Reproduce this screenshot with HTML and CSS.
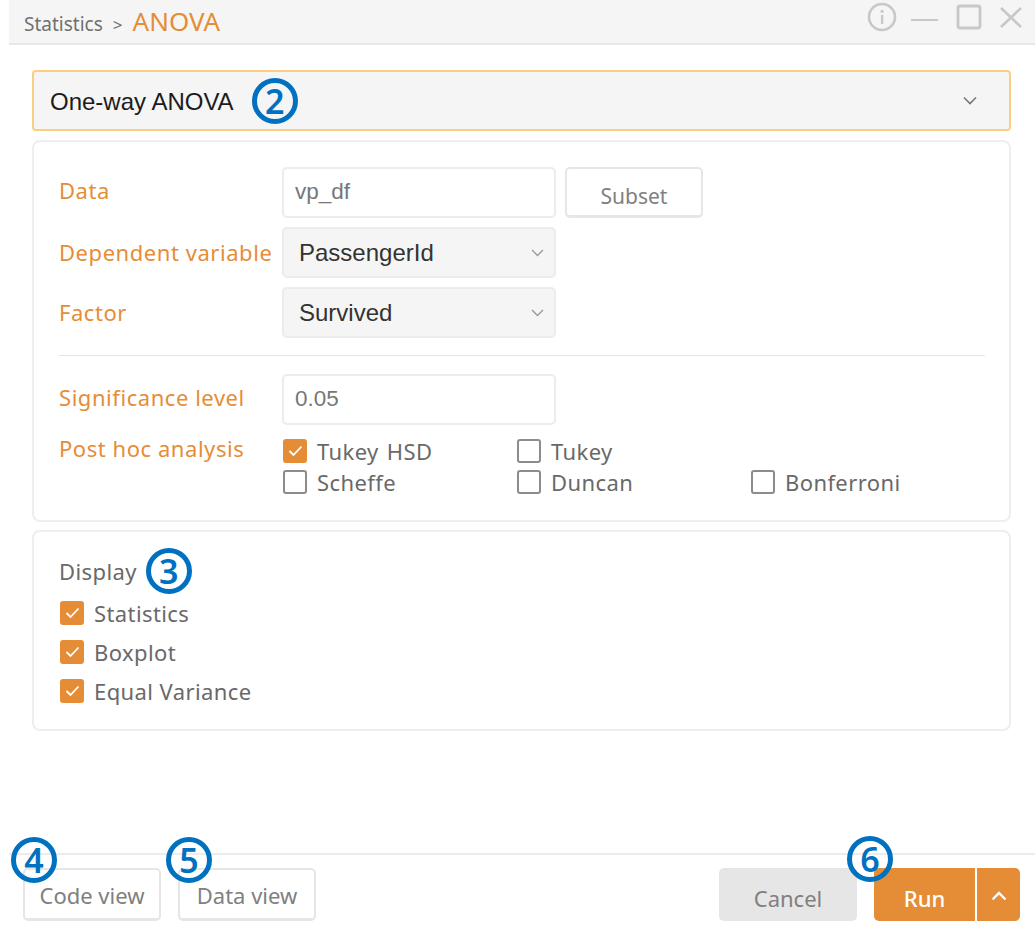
FILE: index.html
```html
<!DOCTYPE html>
<html lang="en">
  <head>
    <meta charset="UTF-8" />
    <meta name="viewport" content="width=device-width, initial-scale=1.0" />
    <title>ANOVA</title>
    <link rel="stylesheet" href="styles.css">
  </head>
  <body>
    <div class="window">
      <header class="title-bar">
        <div class="crumbs">
          <span class="crumb">Statistics</span>
          <span class="crumb-sep">&gt;</span>
          <span class="crumb-current">ANOVA</span>
        </div>
        <div class="window-icons">
          <svg class="icon-info" width="30" height="30" viewBox="0 0 30 30">
            <circle cx="15" cy="15" r="13" fill="none" stroke="#c8c8c8" stroke-width="2.6" />
            <rect x="13.9" y="13" width="2.4" height="9" fill="#c8c8c8" />
            <circle cx="15.1" cy="9.4" r="1.6" fill="#c8c8c8" />
          </svg>
          <svg class="icon-min" width="28" height="4" viewBox="0 0 28 4">
            <rect x="0" y="1" width="27" height="2" fill="#c8c8c8" />
          </svg>
          <svg class="icon-max" width="26" height="26" viewBox="0 0 26 26">
            <rect x="2" y="2" width="22" height="22" rx="2" fill="none" stroke="#c8c8c8" stroke-width="2.8" />
          </svg>
          <svg class="icon-close" width="24" height="24" viewBox="0 0 24 24">
            <path d="M2 3 L22 22 M22 3 L2 22" fill="none" stroke="#c8c8c8" stroke-width="2.6" />
          </svg>
        </div>
      </header>

      <main class="content">
        <div class="type-select">
          <span class="type-name">One-way ANOVA</span>
          <span class="badge">2</span>
          <svg class="chevron type-chevron" width="14" height="9" viewBox="0 0 14 9">
            <path d="M1 1.5 L7 7.5 L13 1.5" fill="none" stroke="#777" stroke-width="1.6" />
          </svg>
        </div>

        <section class="panel panel-options">
          <div class="form-row">
            <label class="field-label field-label-raised">Data</label>
            <div class="text-box">vp_df</div>
            <button class="subset-button">Subset</button>
          </div>
          <div class="form-row">
            <label class="field-label">Dependent variable</label>
            <div class="select-box">
              <span>PassengerId</span>
              <svg class="chevron" width="13" height="8" viewBox="0 0 13 8">
                <path d="M1 1 L6.5 6.5 L12 1" fill="none" stroke="#999" stroke-width="1.4" />
              </svg>
            </div>
          </div>
          <div class="form-row">
            <label class="field-label">Factor</label>
            <div class="select-box">
              <span>Survived</span>
              <svg class="chevron" width="13" height="8" viewBox="0 0 13 8">
                <path d="M1 1 L6.5 6.5 L12 1" fill="none" stroke="#999" stroke-width="1.4" />
              </svg>
            </div>
          </div>
          <hr class="divider" />
          <div class="form-row">
            <label class="field-label field-label-raised">Significance level</label>
            <div class="text-box">0.05</div>
          </div>
          <div class="form-row form-row-checks">
            <label class="field-label">Post hoc analysis</label>
            <div class="check-grid">
              <div class="check"><span class="box checked"><svg width="15" height="12" viewBox="0 0 15 12"><path d="M1.5 6 L5.5 10 L13.5 1.5" fill="none" stroke="#fff" stroke-width="1.8" /></svg></span>Tukey HSD</div>
              <div class="check"><span class="box"></span>Tukey</div>
              <div class="check-empty"></div>
              <div class="check"><span class="box"></span>Scheffe</div>
              <div class="check"><span class="box"></span>Duncan</div>
              <div class="check"><span class="box"></span>Bonferroni</div>
            </div>
          </div>
        </section>

        <section class="panel panel-display">
          <div class="display-head">
            <span class="display-title">Display</span>
            <span class="badge">3</span>
          </div>
          <div class="check display-check"><span class="box checked"><svg width="15" height="12" viewBox="0 0 15 12"><path d="M1.5 6 L5.5 10 L13.5 1.5" fill="none" stroke="#fff" stroke-width="1.8" /></svg></span>Statistics</div>
          <div class="check display-check"><span class="box checked"><svg width="15" height="12" viewBox="0 0 15 12"><path d="M1.5 6 L5.5 10 L13.5 1.5" fill="none" stroke="#fff" stroke-width="1.8" /></svg></span>Boxplot</div>
          <div class="check display-check"><span class="box checked"><svg width="15" height="12" viewBox="0 0 15 12"><path d="M1.5 6 L5.5 10 L13.5 1.5" fill="none" stroke="#fff" stroke-width="1.8" /></svg></span>Equal Variance</div>
        </section>
      </main>

      <footer class="footer">
        <div class="footer-left">
          <button class="view-button">Code view<span class="badge badge-view">4</span></button>
          <button class="view-button">Data view<span class="badge badge-view">5</span></button>
        </div>
        <div class="footer-right">
          <button class="cancel-button">Cancel</button>
          <button class="run-button">Run<span class="badge badge-run">6</span></button>
          <button class="run-more">
            <svg width="16" height="10" viewBox="0 0 16 10">
              <path d="M1.5 8.5 L8 2 L14.5 8.5" fill="none" stroke="#fff" stroke-width="2.4" />
            </svg>
          </button>
        </div>
      </footer>
    </div>
  </body>
</html>
```

FILE: styles.css
```css
* {
  box-sizing: border-box;
}
body {
  margin: 0;
  background-color: #fff;
  font-family: "Noto Sans", sans-serif;
  color: #696969;
}
.window {
  width: 1035px;
  height: 931px;
  padding-left: 9px;
  display: flex;
  flex-direction: column;
}
.title-bar {
  height: 45px;
  flex: none;
  background-color: #f5f5f5;
  border-bottom: 2px solid #e8e8e8;
  display: flex;
  justify-content: space-between;
  align-items: center;
  padding: 0 12px 0 15px;
}
.crumbs {
  display: flex;
  align-items: baseline;
  margin-top: -2px;
}
.crumb {
  font-size: 19px;
  color: #707070;
}
.crumb-sep {
  font-size: 17px;
  color: #707070;
  margin: 0 10px;
}
.crumb-current {
  font-size: 26px;
  color: #e58d36;
}
.window-icons {
  display: flex;
  align-items: center;
  margin: -10px 0 0;
}
.icon-min {
  margin: 6px 0 0 14px;
}
.icon-max {
  margin-left: 17px;
}
.icon-close {
  margin-left: 17px;
}
.content {
  flex: 1;
  padding: 25px 24px 0 23px;
  display: flex;
  flex-direction: column;
}
.type-select {
  height: 61px;
  margin-bottom: 9px;
  background-color: #f5f5f5;
  border: 2px solid #fbcf7f;
  border-radius: 4px;
  display: flex;
  align-items: center;
  padding: 0 32px 0 16px;
  font-family: "Liberation Sans", sans-serif;
  font-size: 24px;
  color: #1c1c1c;
}
.type-name {
  margin-right: 18px;
  padding-top: 2px;
}
.type-chevron {
  margin-left: auto;
}
.badge {
  width: 46px;
  height: 46px;
  border: 5px solid #0070c0;
  border-radius: 50%;
  color: #0070c0;
  font-family: "Noto Sans", sans-serif;
  font-size: 34px;
  font-weight: 600;
  line-height: 1;
  display: inline-flex;
  align-items: center;
  justify-content: center;
  flex: none;
}
.panel {
  border: 2px solid #eeeeee;
  border-radius: 8px;
  background-color: #fff;
}
.panel-options {
  height: 382px;
  margin-bottom: 8px;
  padding: 25px 26px 0 25px;
  display: flex;
  flex-direction: column;
  gap: 9px;
}
.form-row {
  display: flex;
  align-items: center;
  height: 51px;
}
.field-label {
  position: relative;
  top: -1px;
  width: 223px;
  flex: none;
  font-size: 22px;
  letter-spacing: 0.55px;
  color: #e58d36;
}
.field-label-raised {
  top: -3px;
}
.text-box,
.select-box {
  width: 274px;
  height: 51px;
  border: 2px solid #ececec;
  border-radius: 5px;
  display: flex;
  align-items: center;
}
.text-box {
  padding: 0 11px 2px;
  font-family: "Liberation Sans", sans-serif;
  font-size: 22.5px;
  color: #777;
  background-color: #fff;
}
.select-box {
  background-color: #f5f5f5;
  padding: 1px 10px 0 15px;
  justify-content: space-between;
  font-family: "Liberation Sans", sans-serif;
  font-size: 24px;
  color: #333;
}
.subset-button {
  width: 138px;
  height: 51px;
  margin-left: 9px;
  border: 2px solid #e6e6e6;
  border-bottom-width: 3px;
  border-radius: 5px;
  background-color: #fff;
  font-family: "Noto Sans", sans-serif;
  font-size: 21px;
  color: #808080;
  padding-top: 8px;
}
.divider {
  border: none;
  border-top: 1px solid #e6e6e6;
  width: 926px;
  margin: 8px 0 9px;
}
.form-row-checks {
  height: auto;
  align-items: flex-start;
  margin-top: 5px;
}
.form-row-checks .field-label {
  top: -6px;
}
.check-grid {
  display: grid;
  grid-template-columns: 234px 234px auto;
  row-gap: 7px;
  padding-left: 1px;
  word-spacing: 2px;
}
.check {
  display: flex;
  align-items: center;
  height: 24px;
  font-size: 22px;
  color: #696969;
  letter-spacing: 0.4px;
}
.box {
  width: 24px;
  height: 24px;
  flex: none;
  margin-right: 10px;
  border: 2px solid #8c8c8c;
  border-radius: 3px;
  background-color: #fff;
  display: flex;
  align-items: center;
  justify-content: center;
}
.box.checked {
  background-color: #e58d36;
  border-color: #e58d36;
}
.panel-display {
  height: 201px;
  padding: 16px 0 0 25px;
}
.display-head {
  display: flex;
  align-items: center;
  height: 46px;
  margin-bottom: 7px;
}
.display-title {
  font-size: 22px;
  letter-spacing: 0.4px;
  margin-right: 9px;
}
.display-check {
  margin: 0 0 15px 1px;
}
.footer {
  height: 78px;
  flex: none;
  border-top: 2px solid #ececec;
  display: flex;
  justify-content: space-between;
  padding: 13px 15px 0 14px;
}
.footer-left,
.footer-right {
  display: flex;
}
.view-button {
  position: relative;
  width: 138px;
  height: 53px;
  margin-right: 17px;
  border: 2px solid #e6e6e6;
  border-bottom-width: 3px;
  border-radius: 5px;
  background-color: #fff;
  font-family: "Noto Sans", sans-serif;
  font-size: 22px;
  color: #808080;
  padding-top: 3px;
}
.cancel-button {
  width: 138px;
  height: 53px;
  margin-right: 17px;
  border: none;
  border-radius: 5px;
  background-color: #e6e6e6;
  font-family: "Noto Sans", sans-serif;
  font-size: 22px;
  color: #808080;
  padding-top: 8px;
}
.run-button,
.run-more {
  height: 53px;
  border: none;
  background-color: #e58d36;
  color: #fff;
}
.run-button {
  position: relative;
  width: 101px;
  border-radius: 5px 0 0 5px;
  font-family: "Noto Sans", sans-serif;
  font-size: 22px;
  font-weight: 500;
  padding-top: 8px;
}
.run-more {
  width: 43px;
  margin-left: 2px;
  border-radius: 0 5px 5px 0;
  padding: 3px 0 0;
}
.badge-view,
.badge-run {
  position: absolute;
}
.badge-view {
  top: -33px;
  left: -14px;
}
.badge-run {
  top: -32px;
  left: -27px;
}
```
